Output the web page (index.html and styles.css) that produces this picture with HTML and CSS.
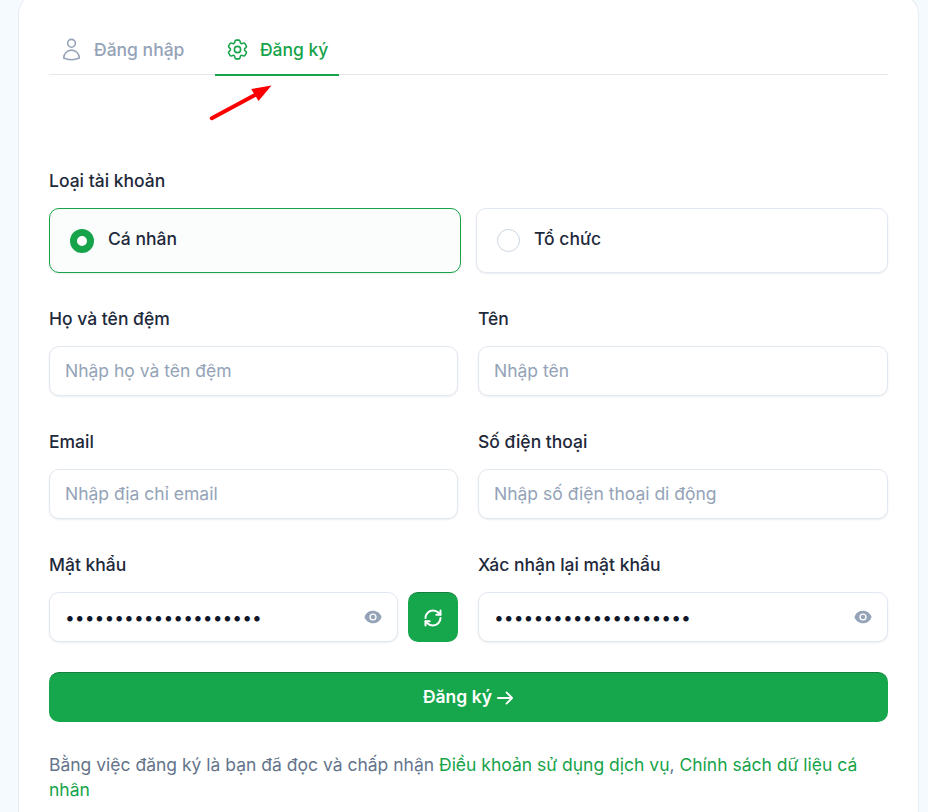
FILE: index.html
```html
<!DOCTYPE html>
<html lang="vi">
<head>
<meta charset="utf-8">
<title>Đăng ký</title>
<link rel="stylesheet" href="styles.css">
</head>
<body>
<main class="card">
  <nav class="tabs">
    <a class="tab">
      <svg class="tab-icon" viewBox="0 0 24 24" fill="none" stroke="currentColor" stroke-width="1.5" stroke-linecap="round" stroke-linejoin="round"><path d="M15.75 6a3.75 3.75 0 1 1-7.5 0 3.75 3.75 0 0 1 7.5 0Z"/><path d="M4.5 20.118a7.5 7.5 0 0 1 15 0A17.933 17.933 0 0 1 12 21.75c-2.676 0-5.216-.584-7.5-1.632Z"/></svg>
      <span>Đăng nhập</span>
    </a>
    <a class="tab active">
      <svg class="tab-icon" viewBox="0 0 24 24" fill="none" stroke="currentColor" stroke-width="1.5" stroke-linecap="round" stroke-linejoin="round"><path d="M9.594 3.94c.09-.542.56-.94 1.11-.94h2.593c.55 0 1.02.398 1.11.94l.213 1.281c.063.374.313.686.645.87.074.04.147.083.22.127.325.196.72.257 1.075.124l1.217-.456a1.125 1.125 0 0 1 1.37.49l1.296 2.247a1.125 1.125 0 0 1-.26 1.431l-1.003.827c-.293.241-.438.613-.43.992a7.723 7.723 0 0 1 0 .255c-.008.378.137.75.43.991l1.004.827c.424.35.534.955.26 1.43l-1.298 2.247a1.125 1.125 0 0 1-1.369.491l-1.217-.456c-.355-.133-.75-.072-1.076.124a6.47 6.47 0 0 1-.22.128c-.331.183-.581.495-.644.869l-.213 1.281c-.09.543-.56.94-1.11.94h-2.594c-.55 0-1.019-.398-1.11-.94l-.213-1.281c-.062-.374-.312-.686-.644-.87a6.52 6.52 0 0 1-.22-.127c-.325-.196-.72-.257-1.076-.124l-1.217.456a1.125 1.125 0 0 1-1.369-.49l-1.297-2.247a1.125 1.125 0 0 1 .26-1.431l1.004-.827c.292-.24.437-.613.43-.991a6.932 6.932 0 0 1 0-.255c.007-.38-.138-.751-.43-.992l-1.004-.827a1.125 1.125 0 0 1-.26-1.43l1.297-2.247a1.125 1.125 0 0 1 1.37-.491l1.216.456c.356.133.751.072 1.076-.124.072-.044.146-.086.22-.128.332-.183.582-.495.644-.869l.214-1.28Z"/><path d="M15 12a3 3 0 1 1-6 0 3 3 0 0 1 6 0Z"/></svg>
      <span>Đăng ký</span>
    </a>
  </nav>
  <svg class="annotation" viewBox="0 0 64 38" fill="none"><path d="M2.8 34.2 L46 11" stroke="#fb0000" stroke-width="4" stroke-linecap="round"/><path d="M62.5 1.5 L42.2 5 L49.5 17 Z" fill="#fb0000"/></svg>

  <form class="form">
    <section class="account">
      <div class="label">Loại tài khoản</div>
      <div class="account-options">
        <div class="option selected"><span class="radio"></span><span class="option-text">Cá nhân</span></div>
        <div class="option"><span class="radio"></span><span class="option-text">Tổ chức</span></div>
      </div>
    </section>

    <div class="grid">
      <div class="field">
        <div class="label">Họ và tên đệm</div>
        <div class="input placeholder"><span class="input-text">Nhập họ và tên đệm</span></div>
      </div>
      <div class="field">
        <div class="label">Tên</div>
        <div class="input placeholder"><span class="input-text">Nhập tên</span></div>
      </div>
      <div class="field">
        <div class="label">Email</div>
        <div class="input placeholder"><span class="input-text">Nhập địa chỉ email</span></div>
      </div>
      <div class="field">
        <div class="label">Số điện thoại</div>
        <div class="input placeholder"><span class="input-text">Nhập số điện thoại di động</span></div>
      </div>
      <div class="field">
        <div class="label">Mật khẩu</div>
        <div class="input-row">
          <div class="input password">
            <span class="dots">••••••••••••••••••••</span>
            <svg class="eye" viewBox="0 0 20 20" fill="currentColor"><path d="M10 12.5a2.5 2.5 0 1 0 0-5 2.5 2.5 0 0 0 0 5Z"/><path fill-rule="evenodd" d="M.664 10.59a1.651 1.651 0 0 1 0-1.186A10.004 10.004 0 0 1 10 3c4.257 0 7.893 2.66 9.336 6.41.147.381.146.804 0 1.186A10.004 10.004 0 0 1 10 17c-4.257 0-7.893-2.66-9.336-6.41ZM14 10a4 4 0 1 1-8 0 4 4 0 0 1 8 0Z" clip-rule="evenodd"/></svg>
          </div>
          <button type="button" class="refresh">
            <svg viewBox="0 0 24 24" fill="none" stroke="currentColor" stroke-width="2.4" stroke-linecap="round" stroke-linejoin="round"><path d="M3 12a9 9 0 0 1 9-9 9.75 9.75 0 0 1 6.74 2.74L21 8"/><path d="M21 3v5h-5"/><path d="M21 12a9 9 0 0 1-9 9 9.75 9.75 0 0 1-6.74-2.74L3 16"/><path d="M8 16H3v5"/></svg>
          </button>
        </div>
      </div>
      <div class="field">
        <div class="label">Xác nhận lại mật khẩu</div>
        <div class="input password">
          <span class="dots">••••••••••••••••••••</span>
          <svg class="eye" viewBox="0 0 20 20" fill="currentColor"><path d="M10 12.5a2.5 2.5 0 1 0 0-5 2.5 2.5 0 0 0 0 5Z"/><path fill-rule="evenodd" d="M.664 10.59a1.651 1.651 0 0 1 0-1.186A10.004 10.004 0 0 1 10 3c4.257 0 7.893 2.66 9.336 6.41.147.381.146.804 0 1.186A10.004 10.004 0 0 1 10 17c-4.257 0-7.893-2.66-9.336-6.41ZM14 10a4 4 0 1 1-8 0 4 4 0 0 1 8 0Z" clip-rule="evenodd"/></svg>
        </div>
      </div>
    </div>

    <button type="button" class="submit">
      <span class="submit-text">Đăng ký</span>
      <svg viewBox="0 0 24 24" fill="none" stroke="currentColor" stroke-width="2.4" stroke-linecap="round" stroke-linejoin="round"><path d="M2.5 12h19M14 4.5l7.5 7.5-7.5 7.5"/></svg>
    </button>

    <p class="terms">Bằng việc đăng ký là bạn đã đọc và chấp nhận <a>Điều khoản sử dụng dịch vụ</a>, <a>Chính sách dữ liệu cá nhân</a></p>
  </form>
</main>
</body>
</html>
```

FILE: styles.css
```css
* { box-sizing: border-box; }
html, body { height: 100%; overflow: hidden; }
body {
  margin: 0;
  background: #f5faff;
  font-family: Inter, "Liberation Sans", sans-serif;
  color: #1e293b;
}
.card {
  position: relative;
  width: 901px;
  height: 818px;
  margin: -6px 0 0 18px;
  padding: 6px 30px 0;
  background: #fff;
  border: 1px solid #e5edf5;
  border-bottom: 0;
  border-radius: 20px 20px 0 0;
}
.tabs {
  display: flex;
  gap: 20px;
  height: 74px;
  border-bottom: 1px solid #e5e7eb;
}
.tab {
  display: flex;
  align-items: center;
  gap: 10px;
  height: 75px;
  padding: 24px 10.5px 0 10px;
  font-size: 17.5px;
  font-weight: 500;
  color: #94a3b8;
  border-bottom: 2px solid transparent;
}
.tab.active { color: #16a34a; border-bottom-color: #16a34a; }
.tab-icon { width: 25px; height: 25px; flex: none; }
.annotation {
  position: absolute;
  left: 190px;
  top: 89px;
  width: 64px;
  height: 38px;
}
.form { display: flex; flex-direction: column; padding-top: 94px; }
.label {
  font-size: 17.5px;
  line-height: 24px;
  font-weight: 500;
  color: #1e293b;
  margin-bottom: 15px;
}
.account-options { display: grid; grid-template-columns: 412px 412px; gap: 15px; }
.option {
  display: flex;
  align-items: center;
  gap: 14px;
  height: 65px;
  padding: 0 20px;
  font-size: 17.5px;
  font-weight: 500;
  background: #fff;
  border: 1px solid #e2e8f0;
  border-radius: 10px;
  box-shadow: 0 1px 2px rgba(15, 23, 42, .08);
}
.option.selected { background: #fafdfb; border-color: #16a34a; }
.option-text { padding-bottom: 5px; }
.radio {
  width: 23px;
  height: 23px;
  flex: none;
  border: 1px solid #cbd5e1;
  border-radius: 50%;
  background: #fff;
}
.selected .radio { width: 24px; height: 24px; border: 7px solid #16a34a; }
.grid {
  display: grid;
  grid-template-columns: 409px 410px;
  column-gap: 20px;
  row-gap: 34px;
  margin-top: 34px;
}
.input {
  display: flex;
  align-items: center;
  height: 50px;
  padding: 0 15px;
  background: #fff;
  border: 1px solid #e2e8f0;
  border-radius: 10px;
  box-shadow: 0 1px 2px rgba(15, 23, 42, .08);
  font-size: 17.5px;
}
.input-text { padding-bottom: 2px; }
.placeholder { color: #94a3b8; }
.input-row { display: flex; gap: 10px; }
.input-row .input { flex: 1; }
.password { justify-content: space-between; padding: 0 15px; }
.dots { font-size: 17.5px; letter-spacing: 0; color: #0f172a; }
.eye { width: 18px; height: 18px; color: #94a3b8; }
.refresh {
  display: flex;
  align-items: center;
  justify-content: center;
  width: 50px;
  height: 50px;
  padding: 0;
  color: #fff;
  background: #16a64c;
  border: 0;
  border-top: 1px solid #15803d;
  border-radius: 10px;
}
.refresh svg { width: 20px; height: 20px; }
.submit {
  display: flex;
  align-items: center;
  justify-content: center;
  gap: 4px;
  height: 50px;
  margin-top: 30px;
  padding: 0;
  font: 600 17.5px Inter, "Liberation Sans", sans-serif;
  color: #fff;
  background: #16a64c;
  border: 0;
  border-top: 1px solid #15803d;
  border-radius: 10px;
}
.submit-text { padding-bottom: 2px; }
.submit svg { width: 18px; height: 18px; }
.terms {
  margin: 30px 0 0;
  font-size: 17.5px;
  line-height: 25px;
  color: #64748b;
}
.terms a { color: #16a34a; }
```
